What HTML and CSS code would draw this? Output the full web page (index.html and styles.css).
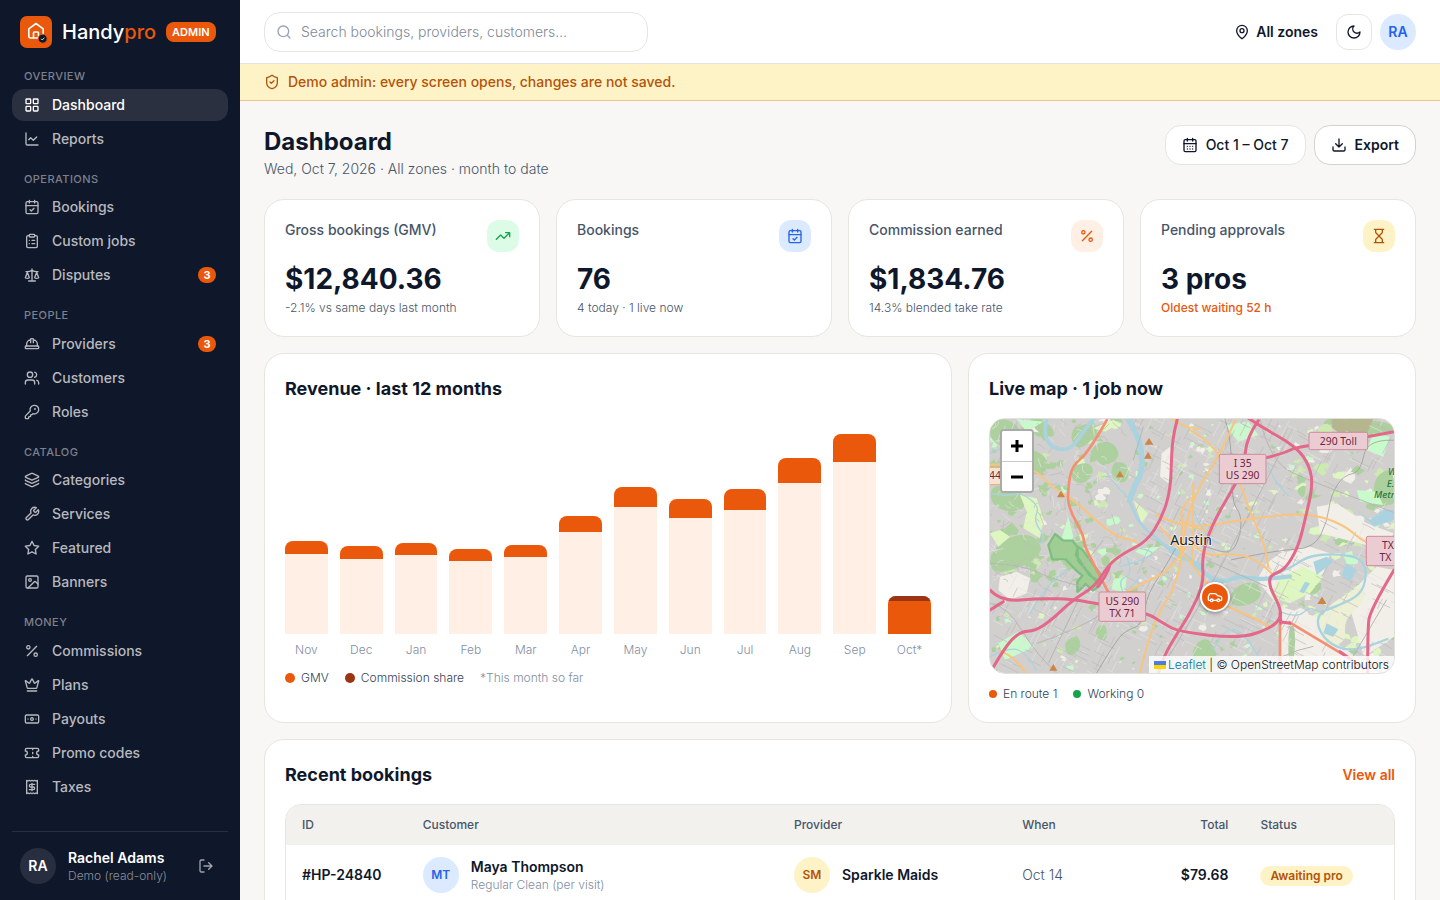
FILE: index.html
```html
<!DOCTYPE html>
<html lang="en">
<head>
<meta charset="utf-8">
<meta name="viewport" content="width=device-width, initial-scale=1">
<title>Handypro Admin</title>
<link rel="stylesheet" href="styles.css">
</head>
<body>
<svg class="sprite" aria-hidden="true">
  <symbol id="grid" viewBox="0 0 24 24"><rect x="3" y="3" width="7" height="7" rx="1"/><rect x="14" y="3" width="7" height="7" rx="1"/><rect x="14" y="14" width="7" height="7" rx="1"/><rect x="3" y="14" width="7" height="7" rx="1"/></symbol>
  <symbol id="chart" viewBox="0 0 24 24"><path d="M3 3v16a2 2 0 0 0 2 2h16"/><path d="m19 9-5 5-4-4-3 3"/></symbol>
  <symbol id="calcheck" viewBox="0 0 24 24"><path d="M8 2v4M16 2v4M3 10h18M9 16l2 2 4-4"/><rect x="3" y="4" width="18" height="18" rx="2"/></symbol>
  <symbol id="clipboard" viewBox="0 0 24 24"><rect x="8" y="2" width="8" height="4" rx="1"/><path d="M16 4h2a2 2 0 0 1 2 2v14a2 2 0 0 1-2 2H6a2 2 0 0 1-2-2V6a2 2 0 0 1 2-2h2M12 11h4M12 16h4M8 11h.01M8 16h.01"/></symbol>
  <symbol id="scale" viewBox="0 0 24 24"><path d="m16 16 3-8 3 8c-.87.65-1.92 1-3 1s-2.13-.35-3-1Z"/><path d="m2 16 3-8 3 8c-.87.65-1.92 1-3 1s-2.13-.35-3-1Z"/><path d="M7 21h10M12 3v18M3 7h2c2 0 5-1 7-2 2 1 5 2 7 2h2"/></symbol>
  <symbol id="hardhat" viewBox="0 0 24 24"><path d="M10 10V5a1 1 0 0 1 1-1h2a1 1 0 0 1 1 1v5M14 6a6 6 0 0 1 6 6v3M4 15v-3a6 6 0 0 1 6-6"/><rect x="2" y="15" width="20" height="4" rx="1"/></symbol>
  <symbol id="users" viewBox="0 0 24 24"><path d="M16 21v-2a4 4 0 0 0-4-4H6a4 4 0 0 0-4 4v2M22 21v-2a4 4 0 0 0-3-3.87M16 3.13a4 4 0 0 1 0 7.75"/><circle cx="9" cy="7" r="4"/></symbol>
  <symbol id="key" viewBox="0 0 24 24"><path d="M2.586 17.414A2 2 0 0 0 2 18.828V21a1 1 0 0 0 1 1h3a1 1 0 0 0 1-1v-1a1 1 0 0 1 1-1h1a1 1 0 0 0 1-1v-1a1 1 0 0 1 1-1h.172a2 2 0 0 0 1.414-.586l.814-.814a6.5 6.5 0 1 0-4-4z"/><circle cx="16.5" cy="7.5" r=".5" fill="currentColor"/></symbol>
  <symbol id="layers" viewBox="0 0 24 24"><path d="M12.83 2.18a2 2 0 0 0-1.66 0L2.6 6.08a1 1 0 0 0 0 1.83l8.58 3.91a2 2 0 0 0 1.66 0l8.58-3.9a1 1 0 0 0 0-1.83z"/><path d="M2 12a1 1 0 0 0 .58.91l8.6 3.91a2 2 0 0 0 1.65 0l8.58-3.9A1 1 0 0 0 22 12M2 17a1 1 0 0 0 .58.91l8.6 3.91a2 2 0 0 0 1.65 0l8.58-3.9A1 1 0 0 0 22 17"/></symbol>
  <symbol id="wrench" viewBox="0 0 24 24"><path d="M14.7 6.3a1 1 0 0 0 0 1.4l1.6 1.6a1 1 0 0 0 1.4 0l3.77-3.77a6 6 0 0 1-7.94 7.94l-6.91 6.91a2.12 2.12 0 0 1-3-3l6.91-6.91a6 6 0 0 1 7.94-7.94l-3.76 3.76z"/></symbol>
  <symbol id="star" viewBox="0 0 24 24"><path d="m12 2 3.1 6.3 6.9 1-5 4.9 1.2 6.8-6.2-3.2L5.8 21 7 14.2 2 9.3l6.9-1z"/></symbol>
  <symbol id="image" viewBox="0 0 24 24"><rect x="3" y="3" width="18" height="18" rx="2"/><circle cx="9" cy="9" r="2"/><path d="m21 15-3.086-3.086a2 2 0 0 0-2.828 0L6 21"/></symbol>
  <symbol id="percent" viewBox="0 0 24 24"><path d="M19 5 5 19"/><circle cx="6.5" cy="6.5" r="2.5"/><circle cx="17.5" cy="17.5" r="2.5"/></symbol>
  <symbol id="crown" viewBox="0 0 24 24"><path d="M11.562 3.266a.5.5 0 0 1 .876 0L15.39 8.87a1 1 0 0 0 1.516.294L21.183 5.5a.5.5 0 0 1 .798.519l-2.834 10.246a1 1 0 0 1-.956.734H5.81a1 1 0 0 1-.957-.734L2.02 6.02a.5.5 0 0 1 .798-.519l4.276 3.664a1 1 0 0 0 1.516-.294z"/><path d="M5 21h14"/></symbol>
  <symbol id="banknote" viewBox="0 0 24 24"><rect x="2" y="6" width="20" height="12" rx="2"/><circle cx="12" cy="12" r="2"/><path d="M6 12h.01M18 12h.01"/></symbol>
  <symbol id="ticket" viewBox="0 0 24 24"><path d="M2 9a3 3 0 0 1 0 6v2a2 2 0 0 0 2 2h16a2 2 0 0 0 2-2v-2a3 3 0 0 1 0-6V7a2 2 0 0 0-2-2H4a2 2 0 0 0-2 2ZM13 5v2M13 17v2M13 11v2"/></symbol>
  <symbol id="receipt" viewBox="0 0 24 24"><path d="M4 2v20l2-1 2 1 2-1 2 1 2-1 2 1 2-1 2 1V2l-2 1-2-1-2 1-2-1-2 1-2-1-2 1Z"/><path d="M16 8h-6a2 2 0 1 0 0 4h4a2 2 0 1 1 0 4H8M12 17.5v-11"/></symbol>
  <symbol id="logout" viewBox="0 0 24 24"><path d="M9 21H5a2 2 0 0 1-2-2V5a2 2 0 0 1 2-2h4M16 17l5-5-5-5M21 12H9"/></symbol>
  <symbol id="search" viewBox="0 0 24 24"><circle cx="11" cy="11" r="8"/><path d="m21 21-4.3-4.3"/></symbol>
  <symbol id="shield" viewBox="0 0 24 24"><path d="M20 13c0 5-3.5 7.5-7.66 8.95a1 1 0 0 1-.67-.01C7.5 20.5 4 18 4 13V6a1 1 0 0 1 1-1c2 0 4.5-1.2 6.24-2.72a1.17 1.17 0 0 1 1.52 0C14.51 3.81 17 5 19 5a1 1 0 0 1 1 1z"/><path d="m9 12 2 2 4-4"/></symbol>
  <symbol id="pin" viewBox="0 0 24 24"><path d="M20 10c0 4.993-5.539 10.193-7.399 11.799a1 1 0 0 1-1.202 0C9.539 20.193 4 14.993 4 10a8 8 0 0 1 16 0"/><circle cx="12" cy="10" r="3"/></symbol>
  <symbol id="moon" viewBox="0 0 24 24"><path d="M12 3a6 6 0 0 0 9 9 9 9 0 1 1-9-9Z"/></symbol>
  <symbol id="caldays" viewBox="0 0 24 24"><path d="M8 2v4M16 2v4M3 10h18M8 14h.01M12 14h.01M16 14h.01M8 18h.01M12 18h.01M16 18h.01"/><rect x="3" y="4" width="18" height="18" rx="2"/></symbol>
  <symbol id="download" viewBox="0 0 24 24"><path d="M21 15v4a2 2 0 0 1-2 2H5a2 2 0 0 1-2-2v-4M7 10l5 5 5-5M12 15V3"/></symbol>
  <symbol id="trend" viewBox="0 0 24 24"><path d="M22 7 13.5 15.5l-5-5L2 17M16 7h6v6"/></symbol>
  <symbol id="hourglass" viewBox="0 0 24 24"><path d="M5 22h14M5 2h14M17 22v-4.172a2 2 0 0 0-.586-1.414L12 12l-4.414 4.414A2 2 0 0 0 7 17.828V22M7 2v4.172a2 2 0 0 0 .586 1.414L12 12l4.414-4.414A2 2 0 0 0 17 6.172V2"/></symbol>
  <symbol id="car" viewBox="0 0 24 24"><path d="M19 17h2c.6 0 1-.4 1-1v-3c0-.9-.7-1.7-1.5-1.9C18.7 10.6 16 10 16 10s-1.3-1.4-2.2-2.3c-.5-.4-1.1-.7-1.8-.7H5c-.6 0-1.1.4-1.4.9l-1.4 2.9A3.7 3.7 0 0 0 2 12v4c0 .6.4 1 1 1h2M9 17h6"/><circle cx="7" cy="17" r="2"/><circle cx="17" cy="17" r="2"/></symbol>
</svg>
<div class="app">
  <aside class="sidebar">
    <div class="brand">
      <svg class="logo" viewBox="0 0 32 32" aria-hidden="true"><rect width="32" height="32" rx="7" fill="#ea580c"/><path d="M8.8 12.800 16 7.500l7.200 5.300V20a2 2 0 0 1-2 2H10.800a2 2 0 0 1-2-2zM13.500 22v-5a1 1 0 0 1 1-1h3a1 1 0 0 1 1 1v5" fill="none" stroke="#fff" stroke-width="1.600" stroke-linejoin="round"/><circle cx="22.700" cy="22.700" r="4.500" fill="#0f172a" stroke="#ea580c"/><path d="m21 22.800 1.200 1.200 2.200-2.300" fill="none" stroke="#fff" stroke-width=".8"/></svg>
      <span class="wordmark">Handy<span>pro</span></span>
      <span class="admin-tag">ADMIN</span>
    </div>
    <nav class="nav" aria-label="Main">
      <section><h2>OVERVIEW</h2>
        <a class="active" href="#"><svg class="icon"><use href="#grid"/></svg>Dashboard</a>
        <a href="#"><svg class="icon"><use href="#chart"/></svg>Reports</a></section>
      <section><h2>OPERATIONS</h2>
        <a href="#"><svg class="icon"><use href="#calcheck"/></svg>Bookings</a>
        <a href="#"><svg class="icon"><use href="#clipboard"/></svg>Custom jobs</a>
        <a href="#"><svg class="icon"><use href="#scale"/></svg>Disputes<span class="count">3</span></a></section>
      <section><h2>PEOPLE</h2>
        <a href="#"><svg class="icon"><use href="#hardhat"/></svg>Providers<span class="count">3</span></a>
        <a href="#"><svg class="icon"><use href="#users"/></svg>Customers</a>
        <a href="#"><svg class="icon"><use href="#key"/></svg>Roles</a></section>
      <section><h2>CATALOG</h2>
        <a href="#"><svg class="icon"><use href="#layers"/></svg>Categories</a>
        <a href="#"><svg class="icon"><use href="#wrench"/></svg>Services</a>
        <a href="#"><svg class="icon"><use href="#star"/></svg>Featured</a>
        <a href="#"><svg class="icon"><use href="#image"/></svg>Banners</a></section>
      <section><h2>MONEY</h2>
        <a href="#"><svg class="icon"><use href="#percent"/></svg>Commissions</a>
        <a href="#"><svg class="icon"><use href="#crown"/></svg>Plans</a>
        <a href="#"><svg class="icon"><use href="#banknote"/></svg>Payouts</a>
        <a href="#"><svg class="icon"><use href="#ticket"/></svg>Promo codes</a>
        <a href="#"><svg class="icon"><use href="#receipt"/></svg>Taxes</a></section>
    </nav>
    <div class="account">
      <span class="avatar dark">RA</span>
      <div class="account-text"><strong>Rachel Adams</strong><span>Demo (read-only)</span></div>
      <button class="logout" type="button" aria-label="Log out"><svg class="icon"><use href="#logout"/></svg></button>
    </div>
  </aside>

  <div class="page">
    <header class="topbar">
      <label class="search"><svg class="icon"><use href="#search"/></svg><input type="search" aria-label="Search" placeholder="Search bookings, providers, customers…"></label>
      <div class="top-actions">
        <button class="zone" type="button"><svg class="icon"><use href="#pin"/></svg>All zones</button>
        <button class="theme" type="button" aria-label="Dark mode"><svg class="icon"><use href="#moon"/></svg></button>
        <button class="avatar blue" type="button">RA</button>
      </div>
    </header>
    <div class="notice"><svg class="icon"><use href="#shield"/></svg>Demo admin: every screen opens, changes are not saved.</div>

    <main class="content">
      <div class="page-head">
        <div><h1>Dashboard</h1><p>Wed, Oct 7, 2026 · All zones · month to date</p></div>
        <div class="head-actions">
          <button class="btn range" type="button"><svg class="icon"><use href="#caldays"/></svg>Oct 1 – Oct 7</button>
          <button class="btn export" type="button"><svg class="icon"><use href="#download"/></svg>Export</button>
        </div>
      </div>

      <div class="stats">
        <article class="card stat"><div class="stat-top"><h2>Gross bookings (GMV)</h2><span class="tile green"><svg class="icon"><use href="#trend"/></svg></span></div><strong>$12,840.36</strong><p>-2.1% vs same days last month</p></article>
        <article class="card stat"><div class="stat-top"><h2>Bookings</h2><span class="tile blue"><svg class="icon"><use href="#calcheck"/></svg></span></div><strong>76</strong><p>4 today · 1 live now</p></article>
        <article class="card stat"><div class="stat-top"><h2>Commission earned</h2><span class="tile peach"><svg class="icon"><use href="#percent"/></svg></span></div><strong>$1,834.76</strong><p>14.3% blended take rate</p></article>
        <article class="card stat"><div class="stat-top"><h2>Pending approvals</h2><span class="tile amber"><svg class="icon"><use href="#hourglass"/></svg></span></div><strong>3 pros</strong><p class="warn">Oldest waiting 52 h</p></article>
      </div>

      <div class="panels">
        <section class="card">
          <h2 class="card-title">Revenue · last 12 months</h2>
          <div class="chart">
            <div class="month"><div class="bar" style="height:93px"><i style="height:13px"></i></div><span>Nov</span></div>
            <div class="month"><div class="bar" style="height:88px"><i style="height:13px"></i></div><span>Dec</span></div>
            <div class="month"><div class="bar" style="height:91px"><i style="height:12px"></i></div><span>Jan</span></div>
            <div class="month"><div class="bar" style="height:85px"><i style="height:12px"></i></div><span>Feb</span></div>
            <div class="month"><div class="bar" style="height:89px"><i style="height:12px"></i></div><span>Mar</span></div>
            <div class="month"><div class="bar" style="height:118px"><i style="height:16px"></i></div><span>Apr</span></div>
            <div class="month"><div class="bar" style="height:147px"><i style="height:20px"></i></div><span>May</span></div>
            <div class="month"><div class="bar" style="height:135px"><i style="height:19px"></i></div><span>Jun</span></div>
            <div class="month"><div class="bar" style="height:145px"><i style="height:21px"></i></div><span>Jul</span></div>
            <div class="month"><div class="bar" style="height:176px"><i style="height:25px"></i></div><span>Aug</span></div>
            <div class="month"><div class="bar" style="height:200px"><i style="height:28px"></i></div><span>Sep</span></div>
            <div class="month current"><div class="bar" style="height:38px"><i style="height:5px"></i></div><span>Oct*</span></div>
          </div>
          <div class="legend"><span class="key orange">GMV</span><span class="key brown">Commission share</span><span class="faint">*This month so far</span></div>
        </section>

        <section class="card">
          <h2 class="card-title">Live map · 1 job now</h2>
          <div class="map">
            <svg class="tiles" viewBox="30 27 1212 762" preserveAspectRatio="xMidYMid slice" role="img" aria-label="Map of Austin">
              <rect x="30" y="27" width="1212" height="762" fill="#d1d0cf"/>
              <g id="patches"></g>
              <g fill="#f2efe9">
                <path d="M60 500l50-15 40 20-10 45-50 20-35-30zM545 130l25-20 10 60-15 50-25-20z"/>
                <path d="M900 430l90-20 60 20-20 60-60 60-90 20-50-60 30-50zM900 590l110 30 60 80 130 90H910l-10-90zM1100 560l90-90 52 10v200l-90 60zM1010 290l60-10 90 60 80 30-20 50-120-30-80-20z"/>
              </g>
              <g class="smooth" fill="#add19e">
                <path d="M30 27l60 0 40 40-30 50-70-20zM60 140l90-30 60 40-20 50-90-20-60 10zM150 27l60 10 20 50-60-20zM270 170l55-15 20 30-35 40-35-15zM270 60l60-25 30 30-50 50-30-5z"/>
                <path d="M35 220l90 20 20 50-60 20-55-30zM30 420l80-50 60 10 20 50-80 50-80 10zM335 105l60-15 30 50-50 30-35-25zM400 150l50 15-10 60-50-20zM250 695l45-20 10 40-40 30zM350 650l30-10 0 60-35-20z"/>
                <path d="M945 240l35-20-8 50zM1090 55l90 25 60-10 0-35-180-8zM760 530l70-20 20 50-50 30-55-5zM1180 200l62-30 0 110-60 20zM640 700l50-20 30 80-60 29-30 0zM925 650l20-5 0 100-20 20z"/>
              </g>
              <path d="M1055 27h125l-20 45-60 15-45-35z" fill="#b5b590"/>
              <g fill="#c8facc">
                <path d="M265 320l15 60-10 20-25-15zM400 510l40-12-5 50-40-10zM480 415l60-5-40 30-35-15zM1130 240l60 5 20 40-70-10zM110 27l80 8-50 30zM55 700l60-35 50 45-90 40zM735 45l70-10 30 40-60 20zM1180 70l50 10-20 60-50-20z"/>
              </g>
              <g fill="#def6c0"><path d="M120 255l50 10 20 60-10 60-50-30 10-50zM30 370l30-10 30 20-35 30zM340 55l60-25 20 10-45 25zM460 270l45 40-20 30zM900 500l70-30 60 30-40 50-60 30-60-20z"/></g>
              <path class="smooth-shape" d="M1040 590l80-50 30-20 10 50-70 60 10 65-60 20-30-65z" fill="#eef0d5"/>
              <g id="streets" fill="none" stroke-linecap="round"></g>
              <g class="smooth" fill="none" stroke="#aad3df" stroke-linejoin="round" stroke-linecap="round">
                <path stroke-width="11" d="M200 27l-8 32 12 44 36 18 38-8 28-44 34-42"/>
                <path stroke-width="17" d="M445 27l24 40 18 60-4 70-20 30-15 45"/>
                <path stroke-width="9" d="M448 270l18 50 32 40 45 35 35 35 40 20 50 15"/>
                <path stroke-width="13" d="M560 410l50 18 50 48 30 28 50 12 30-18 60 10 60-4 40-5"/>
                <path stroke-width="7" d="M870 500l70-30 40-30 80-10 90 15 10 60-20 50-60 30-60 20-10 40 30 50 60 28 70-14 52-22"/>
                <path stroke-width="4" d="M440 440l20 50-45 20 20 50-30 30-55-10M375 180l20 35 50 48M30 250l60 10 30-15 60 45-20 40 40 60-20 10M480 415l50 10-40 25-70 20M700 720l30-70 70 20 40 80M480 500l-40 50-50 40M900 605l50 20 40-35 30 20 50-20M30 130l50-30 40 40M30 740l60-30 50 20 30 50M260 480l-60 40-50 90M640 300l20 60 50 40M860 160l30 70 40 30"/>
              </g>
              <g fill="#aad3df"><path d="M1100 460l30 20-20 35-25-20zM1000 455l40-15 20 15-50 40zM1040 640l35 18-15 22-30-10zM1130 300l40 30 40-30 32 0v30l-60 20zM975 515l15 5-18 30-14-5z"/></g>
              <path d="M205 405l20-33 25 20h28l14 20 2 40 35 40 30 35-20 15-22-20-20 20-5 3v-30l15-18-20-17-30-32h-40zM293 410l15 10 55 75-5 20-30-20-40-60z" fill="#a0cd94" stroke="#7fbe82" stroke-width="7" stroke-linejoin="round"/>
              <g class="smooth" fill="none" stroke="#919191" stroke-width="2"><path d="M350 789l62-105 36-27 34-10 20-85 20-40 30-45 35-62M735 27l20 60 0 190 28 35 0 60-28 60-60-15-55-20M752 450l140-30 110-5 40-80 10-80 40-60 50-8 20-105 100 10"/></g>
              <g class="smooth" fill="none" stroke="#b8b6b6" stroke-width="3"><path d="M30 460l100 5 90 45 90 20M170 700l120-40 80-50M30 580l50 5 90 150 60 54M490 50l-30 100M300 480l70-90M560 750l150-240 200-400M840 27l30 130 130 60 240 90M680 450l180 80M1090 789l130-220M840 789l60-60 100-20M205 760l90-190"/></g>
              <g class="smooth" fill="none" stroke="#f9c47d" stroke-width="6" stroke-linejoin="round" stroke-linecap="round">
                <path d="M30 164l60-3 80 20 50 54 60 35 45 40 50 45 45 30 50 8M630 265l-22 25-8 38 36 22 60 20M530 315l40 20 70 15 60-5 130-22 120-12 80 10 70 30 50 45 52 20M480 789l35-150 80-120 22-190 45-110 50-70 55-120M630 60l50 30 40 50 55 60 35 110 45 90 10 70M540 350l50 55 90 115M640 400l30 40 80-10 80 15 50 50M730 585l80 30 60 35M575 27l45 30 40 0M430 550l80-40 60-30 50-70M60 722l55 25 20 42M607 330l-5 100M640 220l-4 240"/>
              </g>
              <g class="smooth" fill="none" stroke="#f48f72" stroke-width="8" stroke-linejoin="round"><path d="M382 27l-56 100-50 40-12 65 0 60 48 85 0 35 76 140M900 630l0 159M925 635l175 105"/></g>
              <g class="smooth" fill="none" stroke="#e3688a" stroke-width="9" stroke-linejoin="round" stroke-linecap="round">
                <path d="M592 27l-9 33-8 60-3 120-27 85-45 70-70 35-45 35-40 65-65 38-65 62-50 33-45 2-45 45-45 79"/>
                <path d="M30 540l32 35 118-10 100 3 77 14 143 26 50 32 45 25 185 21 90-31 33-30-3-35-32-60 2-35 45-15 40-70 20-80 23-100-8-60-40-60-125-70-55-40"/>
                <path d="M835 32l-35 50-8 90-27 53-70 120-30 95 7 80-42 90-35 55-45 75-15 49"/>
                <path d="M795 160l110-27 45-23 110-10 182-35M30 600l40-25M900 610l3 30M900 635l30 5M1242 480l-72 120-7 60 0 129M1080 725l70 50M388 470l-10 30-25 30"/>
              </g>
              <g fill="#cc8447"><path d="m507 84 13 20h-26zM504 126l12 20h-24zM420 182l12 20h-24zM243 242l12 20h-24zM220 762l12 20h-24zM1026 560l14 22h-28z"/></g>
              <g fill="#ecccd3" stroke="#cf8b9c" stroke-width="3"><rect x="357" y="546" width="140" height="88" rx="5"/><rect x="718" y="133" width="140" height="88" rx="5"/><rect x="987" y="67" width="176" height="52" rx="5"/><rect x="1159" y="379" width="110" height="88" rx="5"/></g>
              <path d="M20 172h44v52H20z" fill="#f9e2cf" stroke="#d9ae7b" stroke-width="3"/>
              <g class="road-text"><text x="427" y="585">US 290</text><text x="427" y="621">TX 71</text><text x="788" y="171">I 35</text><text x="788" y="207">US 290</text><text x="1075" y="105">290 Toll</text><text x="1224" y="417">TX</text><text x="1216" y="453">TX</text><text x="45" y="208">44</text></g>
              <text class="city" x="633" y="404">Austin</text>
              <g class="park"><text x="1224" y="194">W</text><text x="1220" y="230">E.</text><text x="1182" y="265">Metro</text></g>
            </svg>
            <div class="zoom"><button type="button" aria-label="Zoom in"><svg viewBox="0 0 14 14"><path d="M1 7h12M7 1v12"/></svg></button><button type="button" aria-label="Zoom out"><svg viewBox="0 0 14 14"><path d="M1 7h12"/></svg></button></div>
            <span class="marker"><svg class="icon"><use href="#car"/></svg></span>
            <div class="credit"><svg viewBox="0 0 12 8" aria-hidden="true"><path fill="#4c7be1" d="M0 0h12v4H0z"/><path fill="#ffd500" d="M0 4h12v4H0z"/></svg><a href="#">Leaflet</a> | © OpenStreetMap contributors</div>
          </div>
          <div class="legend small"><span class="key orange">En route 1</span><span class="key lime">Working 0</span></div>
        </section>
      </div>

      <section class="card recent">
        <div class="recent-head"><h2 class="card-title">Recent bookings</h2><a href="#">View all</a></div>
        <div class="table-wrap">
          <table>
            <colgroup><col class="c-id"><col class="c-customer"><col class="c-provider"><col class="c-when"><col class="c-total"><col></colgroup>
            <thead><tr><th>ID</th><th>Customer</th><th>Provider</th><th>When</th><th class="num">Total</th><th>Status</th></tr></thead>
            <tbody><tr>
              <td><b>#HP-24840</b></td>
              <td><div class="person"><span class="avatar pale-blue">MT</span><div><b>Maya Thompson</b><small>Regular Clean (per visit)</small></div></div></td>
              <td><div class="person"><span class="avatar pale-amber">SM</span><b>Sparkle Maids</b></div></td>
              <td class="when">Oct 14</td><td class="num"><b>$79.68</b></td><td><span class="status">Awaiting pro</span></td>
            </tr></tbody>
          </table>
        </div>
      </section>
    </main>
  </div>
</div>
<script src="map.js"></script>
</body>
</html>
```
FILE: styles.css
```css
*{box-sizing:border-box}
body{margin:0;background:#f8f7f5;color:#0f172a;font-family:Inter,"Noto Sans",sans-serif;font-size:14px;line-height:20px}
h1,h2,p{margin:0}
button,input{font:inherit;color:inherit}
button{cursor:pointer}
a{text-decoration:none;color:inherit}
.sprite{position:absolute;width:0;height:0}
.icon{width:16px;height:16px;flex:none;fill:none;stroke:currentColor;stroke-width:2;stroke-linecap:round;stroke-linejoin:round}
.app{display:flex;height:100vh}

.sidebar{display:flex;flex-direction:column;flex:0 0 240px;background:#0f172a;color:#fff;padding:16px 12px 0}
.brand{display:flex;align-items:center;gap:10px;padding:0 8px;margin-bottom:20px}
.logo{width:32px;height:32px}
.wordmark{font-size:20px;line-height:32px;font-weight:500}
.wordmark span{color:#ea580c}
.admin-tag{background:#ea580c;border-radius:8px;padding:2px 6px;font-size:11px;line-height:16px;font-weight:600}
.nav{flex:1;min-height:0;display:flex;flex-direction:column;gap:16px}
.nav section{display:flex;flex-direction:column;gap:2px}
.nav h2{font-size:11px;line-height:1.5;font-weight:500;letter-spacing:.04em;color:#7d818c;padding:0 12px 2px}
.nav a{display:flex;align-items:center;gap:12px;height:32px;padding:0 12px;border-radius:12px;font-weight:500;color:#b7b9bf}
.nav .active{background:#2a3040;color:#fff}
.count{margin-left:auto;background:#ea580c;color:#fff;border-radius:8px;font-size:11px;line-height:16px;font-weight:700;min-width:18px;text-align:center}
.account{display:flex;align-items:center;gap:12px;border-top:1px solid #272e3f;padding:16px 8px}
.account-text{flex:1;display:flex;flex-direction:column}
.account-text strong{font-weight:600}
.account-text span{font-size:12px;line-height:16px;font-weight:300;color:#8b8f99}
.logout{border:0;background:none;color:#9fa2aa;padding:6px;display:flex}
.avatar{display:flex;align-items:center;justify-content:center;flex:none;width:36px;height:36px;border:0;border-radius:50%;font-size:14px;font-weight:600}
.dark{background:#272e3f}
.blue{background:#dbeafe;color:#2563eb}
.pale-blue{background:#dbeafe;color:#2563eb;font-size:12px}
.pale-amber{background:#fef3c7;color:#b45309;font-size:12px}

.page{flex:1;min-width:0;overflow-y:auto;scrollbar-width:none}
.topbar{display:flex;align-items:center;justify-content:space-between;height:64px;padding:0 24px;background:#fff;border-bottom:1px solid #e2e4e8}
.search{display:flex;align-items:center;gap:9px;width:384px;height:40px;padding:0 11px;border:1px solid #e7e5e0;border-radius:16px;color:#94a3b8}
.search input{flex:1;min-width:0;border:0;outline:0;padding:0;background:none}
.search input::placeholder{color:#7f8999;font-weight:300;opacity:1}
.top-actions{display:flex;align-items:center;gap:8px}
.zone{display:flex;align-items:center;gap:6px;border:0;background:none;padding:8px 10px;font-weight:600}
.theme{display:flex;align-items:center;justify-content:center;width:36px;height:36px;padding:0;background:#fff;border:1px solid #e7e5e0;border-radius:12px}
.notice{display:flex;align-items:center;gap:8px;padding:8px 24px;background:#fef3c7;border-bottom:1px solid #ecc58b;color:#b45309;font-weight:500}

.content{padding:24px}
.page-head{display:flex;justify-content:space-between;align-items:flex-start;margin-bottom:20px}
h1{font-size:24px;line-height:34px;font-weight:700}
.page-head p{color:#475569;font-weight:300}
.head-actions{display:flex;gap:8px}
.btn{display:flex;align-items:center;gap:8px;height:40px;padding:0 16px;background:#fff;border:1px solid #e7e5e0;border-radius:16px;font-weight:500}
.export{border-color:#d5d2cc;font-weight:600}
.card{background:#fff;border:1px solid #e7e5e0;border-radius:20px;padding:20px}
.stats{display:grid;grid-template-columns:repeat(4,1fr);gap:16px}
.stat-top{display:flex;justify-content:space-between}
.stat h2{font-size:14px;line-height:20px;font-weight:500;color:#475569}
.tile{display:flex;align-items:center;justify-content:center;width:32px;height:32px;border-radius:12px}
.tile.green{background:#dcfce7;color:#16a34a}
.tile.peach{background:#ffefe5;color:#ea580c}
.tile.amber{background:#fef3c7;color:#b45309}
.stat strong{display:block;margin-top:8px;font-size:28px;line-height:38px;font-weight:700}
.stat p{margin-top:2px;font-size:12px;line-height:16px;font-weight:300;color:#475569}
.stat .warn{color:#ea580c;font-weight:500}

.panels{display:grid;grid-template-columns:43fr 28fr;gap:16px;margin:16px 0}
.panels>.card{min-width:0}
.card-title{font-size:18px;line-height:30px;font-weight:700}
.chart{display:grid;grid-template-columns:repeat(12,1fr);gap:12px;align-items:end;height:240px;margin-top:14px}
.month{display:flex;flex-direction:column;gap:8px;text-align:center;font-size:12px;line-height:16px;font-weight:300;color:#7f8ea4}
.bar{background:#ffefe4;border-radius:8px 8px 0 0;overflow:hidden}
.bar i{display:block;background:#ea580c}
.current .bar{background:#ea580c}
.current .bar i{background:#9a3412}
.legend{display:flex;gap:16px;margin-top:12px;font-size:12px;line-height:16px;font-weight:300;color:#334155}
.key{display:flex;align-items:center;gap:6px}
.key::before{content:"";width:10px;height:10px;border-radius:50%;background:#ea580c}
.brown::before{background:#9a3412}
.lime::before{background:#16a34a}
.small .key::before{width:8px;height:8px}
.faint{color:#7f8ea4}

.map{position:relative;height:256px;margin-top:14px;border:1px solid #e0dfdc;border-radius:16px;overflow:hidden}
.tiles{display:block;width:100%;height:100%}
.road-text{font:31px "Noto Sans",sans-serif;fill:#6e2341;text-anchor:middle}
.city{font:42px "Noto Sans",sans-serif;fill:#222;stroke:#ffffffb0;stroke-width:5px;paint-order:stroke;text-anchor:middle}
.park{font:italic 500 29px "Noto Sans",sans-serif;fill:#297b3c}
.zoom{position:absolute;left:10px;top:10px;border:2px solid #aaa;border-radius:4px;background:#fff;overflow:hidden}
.zoom button{display:flex;align-items:center;justify-content:center;width:30px;height:30px;border:0;background:#fff;padding:0}
.zoom button+button{border-top:1px solid #ccc}
.zoom svg{width:14px;height:14px;stroke:#000;stroke-width:3}
.marker{position:absolute;left:52%;top:64%;width:30px;height:30px;display:flex;align-items:center;justify-content:center;border:2px solid #fff;border-radius:50%;background:#ea580c;color:#fff;box-shadow:0 1px 4px #0006}
.credit{position:absolute;right:0;bottom:0;padding:0 5px;background:#ffffffcc;font-size:12px;line-height:17px;font-weight:300;color:#111;white-space:nowrap}
.credit svg{width:12px;height:8px;margin-right:2px}
.credit a{color:#0078a8}

.recent-head{display:flex;justify-content:space-between;align-items:center}
.recent-head a{color:#ea580c;font-weight:600}
.table-wrap{min-height:420px;margin-top:14px;border:1px solid #e7e5e0;border-radius:16px;overflow:hidden}
table{width:100%;border-collapse:collapse;table-layout:fixed}
.c-id{width:10.9%}.c-customer{width:33.5%}.c-provider{width:20.6%}.c-when{width:10%}.c-total{width:11.5%}
th{height:40px;padding:0 16px;text-align:left;background:#f2f1ed;color:#475569;font-size:12px;line-height:16px;font-weight:500}
td{height:60px;padding:0 16px}
b{font-weight:600}
th.num,td.num{text-align:right}
.when{color:#475569;font-weight:300}
.person{display:flex;align-items:center;gap:12px}
.person small{display:block;font-size:12px;line-height:16px;font-weight:300;color:#7f8ea4}
.status{display:inline-block;background:#fef3c7;color:#b45309;border-radius:10px;padding:2px 10px;font-size:12px;line-height:16px;font-weight:600}
```
FILE: map.js
```js
// Rounds the bends of the map's lines and fills it with land-use patches and local streets.
(function () {
  var seed = 11;
  function rnd() {
    seed = (seed * 16807) % 2147483647;
    return seed / 2147483647;
  }
  var NS = "http://www.w3.org/2000/svg";
  function add(parent, attrs) {
    var p = document.createElementNS(NS, "path");
    for (var k in attrs) p.setAttribute(k, attrs[k]);
    document.getElementById(parent).appendChild(p);
  }

  // Replaces each "M x y l dx dy ..." run by curves through the segment midpoints.
  function smooth(d) {
    return d.split("M").slice(1).map(function (run) {
      var closed = /z/i.test(run);
      var n = run.match(/-?\d+/g).map(Number), pts = [[n[0], n[1]]];
      for (var i = 2; i + 1 < n.length; i += 2) {
        var q = pts[pts.length - 1];
        pts.push([q[0] + n[i], q[1] + n[i + 1]]);
      }
      function mid(a, b) { return (a[0] + b[0]) / 2 + " " + (a[1] + b[1]) / 2; }
      var last = pts.length - 1, out;
      if (closed) {
        out = "M" + mid(pts[last], pts[0]);
        pts.forEach(function (p, j) { out += "Q" + p[0] + " " + p[1] + " " + mid(p, pts[(j + 1) % pts.length]); });
        return out + "Z";
      }
      out = "M" + pts[0].join(" ");
      for (var j = 1; j < last; j++) {
        out += "Q" + pts[j].join(" ") + " " + (j === last - 1 ? pts[last].join(" ") : mid(pts[j], pts[j + 1]));
      }
      return last < 2 ? out + "L" + pts[last].join(" ") : out;
    }).join("");
  }
  document.querySelectorAll(".smooth path, .smooth-shape").forEach(function (p) {
    p.setAttribute("d", smooth(p.getAttribute("d")));
  });

  function blob(x, y, r) {
    var d = "", n = 9;
    for (var i = 0; i < n; i++) {
      var a = i / n * 6.283, q = r * (0.3 + rnd());
      d += (i ? "L" : "M") + Math.round(x + Math.cos(a) * q) + " " + Math.round(y + Math.sin(a) * q * 0.8);
    }
    return d + "Z";
  }
  var colors = ["#add19e", "#c8facc", "#def6c0", "#f2efe9", "#add19e", "#cdebb0"];
  for (var i = 0; i < 620; i++) {
    var x = 30 + rnd() * 1212, y = 27 + rnd() * 762;
    var hills = x < 430 && y < 520, east = x > 960;
    if (!hills && !east && rnd() < 0.3) continue;
    add("patches", {
      d: blob(x, y, hills || east ? 6 + rnd() * 18 : 3 + rnd() * 11),
      fill: hills && rnd() < 0.6 ? "#add19e" : colors[Math.floor(rnd() * 6)]
    });
  }
  for (i = 0; i < 1100; i++) {
    var sx = 30 + rnd() * 1212, sy = 27 + rnd() * 762;
    var west = sx < 430 && sy < 520;
    var angle = west ? rnd() * 6.283 : -1.1 + (rnd() < 0.5 ? 1.571 : 0);
    if (sx > 950 && rnd() < 0.6) continue;
    var len = 12 + rnd() * (west ? 22 : 55);
    var dx = Math.round(Math.cos(angle) * len), dy = Math.round(Math.sin(angle) * len);
    var bend = west ? 20 : 4;
    add("streets", {
      d: "M" + Math.round(sx) + " " + Math.round(sy) + "q" + Math.round(dx / 2 + (rnd() - 0.5) * bend) + " " + Math.round(dy / 2 + (rnd() - 0.5) * bend) + " " + dx + " " + dy,
      stroke: rnd() < 0.45 ? "#bcbaba" : "#e4e3e2",
      "stroke-width": 2
    });
  }
})();
```
